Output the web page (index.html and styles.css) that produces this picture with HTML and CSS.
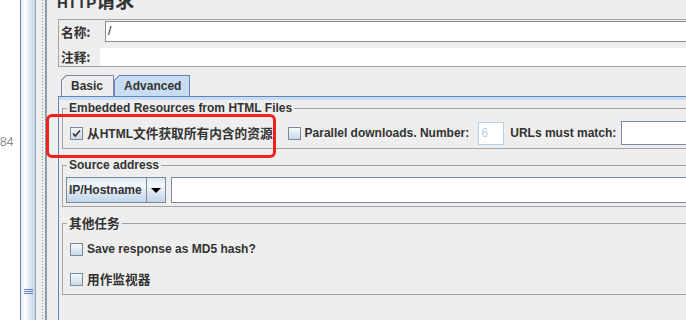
FILE: index.html
```html
<!DOCTYPE html>
<html lang="zh">
<head>
    <meta charset="UTF-8">
    <title>HTTP请求</title>
    <link rel="stylesheet" href="styles.css">
</head>
<body>

    <!-- 左侧行号 / 滚动条 / 分隔条 -->
    <div class="gutter"><span class="line-no">84</span></div>
    <div class="scroll-strip"><div class="grip"></div></div>
    <div class="splitter"></div>

    <main class="editor">
        <h1 class="title">HTTP<span class="zh">请求</span></h1>

        <div class="name-box">
            <div class="name-row">
                <span class="field-label zh">名称:</span>
                <div class="name-input">/</div>
            </div>
            <div class="name-row comment-row">
                <span class="field-label zh">注释:</span>
                <div class="comment-area"></div>
            </div>
        </div>

        <div class="tabs">
            <div class="tab">Basic</div>
            <div class="tab selected">Advanced</div>
        </div>

        <div class="tab-pane">
            <fieldset class="group">
                <legend>Embedded Resources from HTML Files</legend>
                <div class="row">
                    <span class="checkbox checked">
                        <svg width="11" height="11" viewBox="0 0 11 11"><path d="M2 5.5 L4.3 8 L9 2.5" fill="none" stroke="#333" stroke-width="1.7"/></svg>
                    </span>
                    <span class="check-label zh">从<span class="latin">HTML</span>文件获取所有内含的资源</span>
                    <span class="checkbox second"></span>
                    <span class="check-label">Parallel downloads. Number:</span>
                    <div class="number-field">6</div>
                    <span class="urls-label">URLs must match:</span>
                    <div class="field url-field"></div>
                </div>
            </fieldset>

            <fieldset class="group source-group">
                <legend>Source address</legend>
                <div class="row source-row">
                    <div class="combo">
                        <div class="combo-value">IP/Hostname</div>
                        <div class="combo-button"><span class="arrow"></span></div>
                    </div>
                    <div class="field source-field"></div>
                </div>
            </fieldset>

            <fieldset class="group other-group">
                <legend class="zh">其他任务</legend>
                <div class="row">
                    <span class="checkbox"></span>
                    <span class="check-label">Save response as MD5 hash?</span>
                </div>
                <div class="row">
                    <span class="checkbox"></span>
                    <span class="check-label zh">用作监视器</span>
                </div>
            </fieldset>
        </div>
    </main>

    <!-- 红色标注框 -->
    <div class="highlight"></div>

</body>
</html>
```

FILE: styles.css
```css
* {
    box-sizing: border-box;
}

body {
    margin: 0;
    width: 686px;
    height: 320px;
    overflow: hidden;
    display: flex;
    background-color: #eeeeee;
    font-family: "Liberation Sans", "Noto Sans CJK SC", sans-serif;
    font-size: 12px;
    font-weight: bold;
    color: #333333;
}

.zh {
    font-family: "Noto Sans CJK SC", sans-serif;
    font-size: 12.7px;
}

.latin {
    font-family: "Liberation Sans", sans-serif;
    font-size: 12px;
}

/* --- 左侧 --- */
.gutter {
    flex: none;
    width: 20px;
    background-color: #ffffff;
    padding-top: 135px;
    line-height: 14px;
    font-weight: normal;
    color: #8a8a8a;
}

.scroll-strip {
    flex: none;
    width: 16px;
    border-left: 1px solid #6382bf;
    border-right: 1px solid #9aa5b1;
    background: linear-gradient(to right, #e3ebf4, #ffffff 25%, #eef3f9 45%, #c3d4e7);
    display: flex;
    flex-direction: column;
    justify-content: flex-end;
    align-items: center;
    padding-bottom: 26px;
}

.grip {
    width: 9px;
    height: 5px;
    background: repeating-linear-gradient(to bottom, #6382bf 0 1px, transparent 1px 2px);
}

.splitter {
    flex: none;
    width: 11px;
    border-right: 2px solid #8e9aa6;
    background: repeating-linear-gradient(to bottom, #8a8a8a 0 1px, transparent 1px 3px) no-repeat 6px 0 / 1px 100%;
}

/* --- 主面板 --- */
.editor {
    flex: none;
    width: 720px;
    padding-left: 11px;
}

.title {
    height: 18px;
    margin: -9px 0 0 -1px;
    font-size: 15px;
    line-height: 18px;
    color: #333333;
}

.title .zh {
    font-size: 19px;
    line-height: 18px;
}

.name-box {
    margin-top: 10px;
    border: 1px solid #a3a3a3;
    border-right: none;
    padding: 1px 0 0 1px;
}

.name-row {
    display: flex;
    align-items: center;
    height: 21px;
    line-height: 14px;
}

.field-label {
    width: 40px;
    padding-left: 1px;
}

.name-input {
    flex: 1;
    margin-left: 5px;
    height: 21px;
    border: 1px solid #8c8c8c;
    background-color: #ffffff;
    padding-left: 2px;
    line-height: 19px;
    font-weight: normal;
    color: #1a1a1a;
}

.comment-row {
    height: 18px;
    margin-top: 6px;
}

.comment-area {
    flex: 1;
    height: 18px;
    background-color: #ffffff;
}

/* --- 选项卡 --- */
.tabs {
    display: flex;
    margin-top: 8px;
    padding-left: 3px;
}

.tab {
    height: 21px;
    padding: 0 10px 0 9px;
    line-height: 20px;
    border: 1px solid #7a8a99;
    border-bottom: none;
    background: linear-gradient(135deg, transparent 3.5px, #7a8a99 3.5px, #7a8a99 4.6px, #eeeeee 4.6px);
    background-origin: border-box;
    clip-path: polygon(5px 0, 100% 0, 100% 100%, 0 100%, 0 5px);
}

.tab.selected {
    padding-right: 8px;
    border-color: #6382bf;
    background: linear-gradient(135deg, transparent 3.5px, #6382bf 3.5px, #6382bf 4.6px, #c8ddf2 4.6px);
    background-origin: border-box;
}

.tab-pane {
    border-top: 1px solid #6382bf;
    border-left: 1px solid #6382bf;
    box-shadow: inset 0 3px 0 #c8ddf2;
    padding: 4px 0 40px 3px;
}

/* --- 分组 --- */
.group {
    margin: 0;
    min-width: 0;
    padding: 6px 0 3px 3px;
    border: 1px solid #a3a3a3;
    border-right: none;
}

.group legend {
    margin-left: 1px;
    padding: 0 2px;
    line-height: 14px;
}

.source-group {
    margin-top: 9px;
    padding-top: 5px;
}

.other-group {
    margin-top: 9px;
    padding-top: 7px;
}

.row {
    display: flex;
    align-items: center;
    height: 24px;
    line-height: 14px;
    white-space: nowrap;
}

.other-group .row + .row {
    margin-top: 6px;
}

.checkbox {
    flex: none;
    width: 13px;
    height: 13px;
    margin-left: 4px;
    border: 1px solid #7a8a99;
    background: linear-gradient(#f6f9fc, #cbd9e8);
    display: flex;
    align-items: center;
    justify-content: center;
}

.checkbox.second {
    margin-left: 15px;
}

.check-label {
    margin-left: 4px;
}

.number-field {
    flex: none;
    width: 26px;
    height: 23px;
    margin-left: 9px;
    border: 1px solid #b8cfe5;
    background-color: #ffffff;
    padding-left: 2px;
    line-height: 21px;
    font-weight: normal;
    color: #b8cfe5;
}

.urls-label {
    margin-left: 6px;
}

.field {
    flex: 1;
    border: 1px solid #7a8a99;
    background-color: #ffffff;
}

.url-field {
    height: 24px;
    margin-left: 5px;
}

.source-row {
    height: 26px;
}

.combo {
    flex: none;
    display: flex;
    width: 100px;
    height: 26px;
    border: 1px solid #7a8a99;
    background: linear-gradient(to bottom, #dce7f2 0%, #f4f8fb 30%, #dce7f2 60%, #c2d5e8 100%);
}

.combo-value {
    flex: 1;
    padding-left: 2px;
    line-height: 24px;
    border-right: 1px solid #7a8a99;
}

.combo-button {
    width: 18px;
    display: flex;
    align-items: center;
    justify-content: center;
}

.arrow {
    width: 0;
    height: 0;
    border-left: 5px solid transparent;
    border-right: 5px solid transparent;
    border-top: 5px solid #000000;
}

.source-field {
    height: 26px;
    margin-left: 5px;
}

/* --- 标注 --- */
.highlight {
    position: absolute;
    left: 46px;
    top: 114px;
    width: 230px;
    height: 44px;
    border: 3px solid #f0201a;
    border-radius: 6px;
}
```
